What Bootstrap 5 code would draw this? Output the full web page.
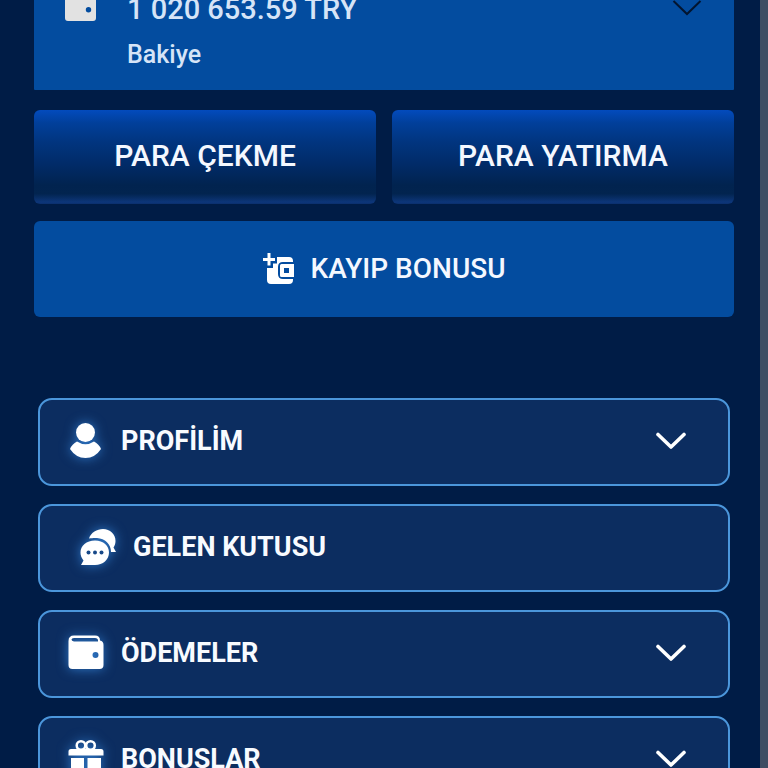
<!DOCTYPE html>
<html lang="tr">
<head>
<meta charset="utf-8">
<meta name="viewport" content="width=device-width, initial-scale=1">
<title>Hesabım</title>
<link href="https://cdn.jsdelivr.net/npm/bootstrap@5.3.0/dist/css/bootstrap.min.css" rel="stylesheet">
<style>
body{background:#001c46;font-family:Roboto,"Noto Sans",sans-serif;color:#fff}
.account-panel{border-right:8px solid #3f4d63;padding:0 26px 0 34px}
.balance{background:#034c9f;margin-top:-36px;padding:24px 32px 18px 30px;border-radius:4px 4px 1px 1px;min-height:126px;color:#d6e4f7}
.balance-amount{font-size:29px;line-height:42px}
.balance-label{font-size:25px;line-height:50px;margin-bottom:-8px}
.balance-icon{margin:1px 30px 0 0}
.balance-arrow{margin-top:10px}
.cash-btn,.bonus-btn{color:#f4f8ff;font-weight:500;line-height:42px;border:0;border-radius:6px}
.cash-btn:hover,.bonus-btn:hover,.menu-btn:hover{color:#fff}
.cash-btn{height:94px;padding:0 0 3px;font-size:30px;background:linear-gradient(180deg,#034bbd 0,#013f9a 14%,#01357f 34%,#012b68 58%,#01234f 80%,#02244f 89%,#0d367a 98%,#0b2f6c 100%)}
.bonus-btn,.bonus-btn:hover{height:96px;margin-top:17px;font-size:28px;background:#034c9f}
.menu-list{margin-top:81px;padding:0 4px;gap:18px}
.menu-btn,.menu-btn:hover{height:88px;padding:0 42px 2px 28px;border:2px solid #4b96db;border-radius:14px;background:#0c2d60;color:#f8fbff;font-size:27px;font-weight:700}
.menu-btn-single,.menu-btn-single:hover{padding-left:40px}
.menu-icon{width:36px;height:38px;margin-right:17px;overflow:visible;filter:drop-shadow(0 0 6px #2f78c8)}
</style>
</head>
<body>
<div class="account-panel vh-100 overflow-hidden d-flex flex-column">
  <section class="balance flex-shrink-0 d-flex align-items-start">
    <svg class="balance-icon flex-shrink-0" width="33" height="34" viewBox="0 0 33 34" aria-hidden="true"><path fill="#e2e2e2" fill-rule="evenodd" d="M5 0H25Q29 0 29 4V6H29Q32 6 32 8V29Q32 32 29 32H4Q1 32 1 29V5Q1 0 5 0ZM24.500 18A2.700 2.700 0 1 0 24.500 23.400A2.700 2.700 0 1 0 24.500 18Z"/></svg>
    <div class="flex-grow-1 fw-medium">
      <div class="balance-amount">1 020 653.59 TRY</div>
      <div class="balance-label">Bakiye</div>
    </div>
    <svg class="balance-arrow" width="30" height="18" viewBox="0 0 30 18" aria-hidden="true"><path d="M1.500 3L15 16L28.500 3" fill="none" stroke="#03152f" stroke-width="2"/></svg>
  </section>
  <div class="row gx-3 mt-1 pt-3 flex-shrink-0">
    <div class="col-6"><button class="btn cash-btn w-100" type="button">PARA ÇEKME</button></div>
    <div class="col-6"><button class="btn cash-btn w-100" type="button">PARA YATIRMA</button></div>
  </div>
  <button class="btn bonus-btn flex-shrink-0 d-flex align-items-center justify-content-center" type="button">
    <svg class="me-3" width="32" height="32" viewBox="0 0 32 32" aria-hidden="true"><g fill="#fff"><path d="M4.500 0H7.500V5H12V8H7.500V12.500H4.500V8H0V5H4.500Z"/><path d="M14 4H26Q30 4 30 8V9H20Q15 9 15 14V21Q15 26 20 26H30V27Q30 31 26 31H8Q4 31 4 27V15H10V10.500H14Z"/><path fill-rule="evenodd" d="M18.500 11H31V24H18.500Q17 24 17 22.500V12.500Q17 11 18.500 11ZM21 15V20H26V15Z"/></g></svg>
    KAYIP BONUSU
  </button>
  <nav class="menu-list d-flex flex-column flex-shrink-0" aria-label="Hesap menüsü">
    <button class="btn menu-btn w-100 d-flex align-items-center" type="button">
      <svg class="menu-icon" viewBox="0 0 36 38" aria-hidden="true"><g fill="#fff"><circle cx="17.500" cy="10.500" r="9.500"/><path d="M2 27Q4 22 9 19.500Q17.500 25 26 19.500Q31 22 33 27Q27 36 17.500 36T2 27Z"/></g></svg>
      <span>PROFİLİM</span>
      <svg class="ms-auto" width="30" height="18" viewBox="0 0 30 18" aria-hidden="true"><path d="M2 2.500L15 15L28 2.500" fill="none" stroke="#fff" stroke-width="3.600" stroke-linecap="round" stroke-linejoin="round"/></svg>
    </button>
    <a class="btn menu-btn menu-btn-single w-100 d-flex align-items-center" href="#">
      <svg class="menu-icon" viewBox="0 0 36 38" aria-hidden="true"><path fill="#fff" d="M9 10.500C11 4.500 17 1 23 1C30 1 35.500 6 35.500 13C35.500 15.500 34.800 17.500 33.500 19.500L36 24H31C31 16 25 10.500 17 10C14 9.800 12 10 9 10.500Z"/><path fill="#fff" d="M15 12.500C23.500 12.500 29 17.500 29 24.500C29 31.500 23 37 15 37H1L3.500 32.500C1.500 30 .5 27.500 .5 24.500C.5 17.500 6.500 12.500 15 12.500Z"/><g fill="#174888"><circle cx="8.500" cy="24.500" r="2"/><circle cx="15" cy="24.500" r="2"/><circle cx="21.500" cy="24.500" r="2"/></g></svg>
      <span>GELEN KUTUSU</span>
    </a>
    <button class="btn menu-btn w-100 d-flex align-items-center" type="button">
      <svg class="menu-icon" viewBox="0 0 36 38" aria-hidden="true"><path fill="#fff" fill-rule="evenodd" d="M6 1.500H27Q32 1.500 32 6.500Q35.500 7 35.500 11V31Q35.500 35 31.500 35H4.500Q.5 35 .5 31V7Q.5 1.500 6 1.500ZM6 4Q3.500 4 3.500 5.500T6 7.500H30V6.500Q30 4 27 4ZM27.500 18A3 3 0 1 0 27.500 24A3 3 0 1 0 27.500 18Z"/></svg>
      <span>ÖDEMELER</span>
      <svg class="ms-auto" width="30" height="18" viewBox="0 0 30 18" aria-hidden="true"><path d="M2 2.500L15 15L28 2.500" fill="none" stroke="#fff" stroke-width="3.600" stroke-linecap="round" stroke-linejoin="round"/></svg>
    </button>
    <button class="btn menu-btn w-100 d-flex align-items-center" type="button">
      <svg class="menu-icon" viewBox="0 0 36 38" aria-hidden="true"><g fill="none" stroke="#fff" stroke-width="2.500"><circle cx="13" cy="5.500" r="4.300"/><circle cx="22.500" cy="5.500" r="4.300"/></g><path fill="#fff" d="M3 9H33Q35.500 9 35.500 11.500V15.500H.5V11.500Q.5 9 3 9ZM3 18H16V37H5Q3 37 3 35ZM19.500 18H33V35Q33 37 31 37H19.500Z"/></svg>
      <span>BONUSLAR</span>
      <svg class="ms-auto" width="30" height="18" viewBox="0 0 30 18" aria-hidden="true"><path d="M2 2.500L15 15L28 2.500" fill="none" stroke="#fff" stroke-width="3.600" stroke-linecap="round" stroke-linejoin="round"/></svg>
    </button>
  </nav>
</div>
<script src="https://cdn.jsdelivr.net/npm/bootstrap@5.3.0/dist/js/bootstrap.bundle.min.js"></script>
</body>
</html>
